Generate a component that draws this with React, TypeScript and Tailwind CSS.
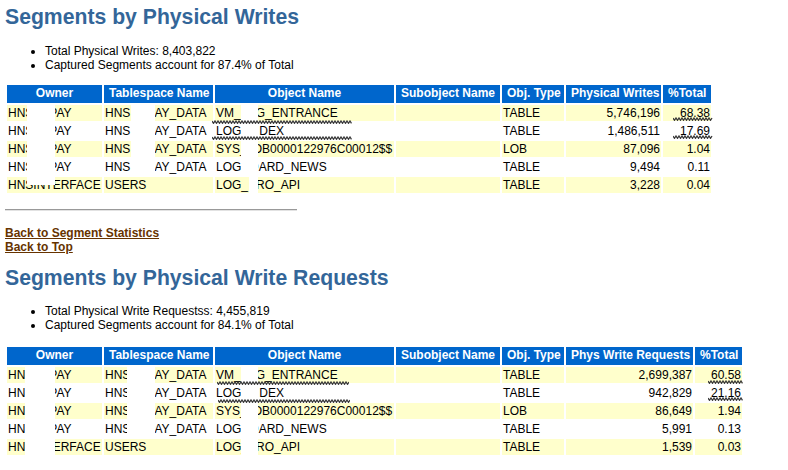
import React from 'react';

// [visible left, hidden gap class, visible right] or plain text
type Frag = string | [string, string, string];

interface SegRow {
  owner: Frag;
  ts: Frag;
  obj: Frag;
  type: string;
  val: string;
  pct: string;
}

const ownerPay: Frag = ['HNS', 'w-[16px]', 'PAY'];
const tsPay: Frag = ['HNS', 'w-[17px]', 'PAY_DATA'];

const objects: Frag[] = [
  ['VM_', 'w-[15px]', 'G_ENTRANCE'],
  ['LOG', 'w-[18px]', 'DEX'],
  ['SYS_', 'w-[6px]', 'OB0000122976C00012$$'],
  ['LOG', 'w-[8px]', 'OARD_NEWS'],
  ['LOG_', 'w-[8px]', 'RO_API'],
];

const types = ['TABLE', 'TABLE', 'LOB', 'TABLE', 'TABLE'];

const makeRows = (vals: string[], pcts: string[]): SegRow[] =>
  vals.map((v, i) => ({
    owner: i === 4 ? 'HNSINTERFACE' : ownerPay,
    ts: i === 4 ? 'USERS' : tsPay,
    obj: objects[i],
    type: types[i],
    val: v,
    pct: pcts[i],
  }));

const writesRows = makeRows(
  ['5,746,196', '1,486,511', '87,096', '9,494', '3,228'],
  ['68.38', '17.69', '1.04', '0.11', '0.04']
);

const requestRows = makeRows(
  ['2,699,387', '942,829', '86,649', '5,991', '1,539'],
  ['60.58', '21.16', '1.94', '0.13', '0.03']
);

const Text: React.FC<{ f: Frag }> = ({ f }) => {
  if (typeof f === 'string') return <>{f}</>;
  return (
    <>
      {f[0]}
      <span className={`inline-block ${f[1]}`} />
      {f[2]}
    </>
  );
};

// hand drawn squiggle under a value
const Squiggle: React.FC<{ className: string; w: number }> = ({ className, w }) => {
  const pts: string[] = [];
  for (let x = 0, i = 0; x <= w; x += 1.5, i++) {
    pts.push(`${x},${i % 2 === 0 ? 1 : 3.3}`);
  }
  return (
    <svg className={`absolute ${className}`} width={w} height={4} viewBox={`0 0 ${w} 4`}>
      <polyline points={pts.join(' ')} fill="none" stroke="#3a3a3a" strokeWidth="1.3" />
    </svg>
  );
};

const th = 'bg-[#0066CC] text-white font-bold text-center pt-px pb-[3px] px-[5px] whitespace-nowrap';

const SegTable: React.FC<{ rows: SegRow[]; valTitle: string; wide?: boolean }> = ({ rows, valTitle, wide }) => (
  <table
    className={`table-fixed border-separate border-spacing-[2px] text-[12px] leading-[14px] ${
      wide ? 'w-[739px]' : 'w-[708px]'
    }`}
  >
    <colgroup>
      <col className="w-[95px]" />
      <col className="w-[109px]" />
      <col className="w-[179px]" />
      <col className="w-[104px]" />
      <col className="w-[62px]" />
      <col className={wide ? 'w-[127px]' : 'w-[95px]'} />
      <col className={wide ? 'w-[47px]' : 'w-[48px]'} />
    </colgroup>
    <thead>
      <tr>
        <th className={th}>Owner</th>
        <th className={th}>Tablespace Name</th>
        <th className={th}>Object Name</th>
        <th className={th}>Subobject Name</th>
        <th className={th}>Obj. Type</th>
        <th className={th}>{valTitle}</th>
        <th className={th}>%Total</th>
      </tr>
    </thead>
    <tbody>
      {rows.map((r, i) => {
        const bg = i % 2 === 0 ? 'bg-[#FFFFCC]' : 'bg-white';
        const td = `${bg} p-px whitespace-nowrap overflow-hidden align-top`;
        return (
          <tr key={i}>
            <td className={td}><Text f={r.owner} /></td>
            <td className={td}><Text f={r.ts} /></td>
            <td className={td}><Text f={r.obj} /></td>
            <td className={td}></td>
            <td className={td}>{r.type}</td>
            <td className={`${td} text-right`}>{r.val}</td>
            <td className={`${td} text-right`}>{r.pct}</td>
          </tr>
        );
      })}
    </tbody>
  </table>
);

const Bullets: React.FC<{ items: string[]; className: string }> = ({ items, className }) => (
  <ul className={`list-disc pl-[40px] text-[12px] leading-[14px] ${className}`}>
    {items.map((t) => (
      <li key={t}>{t}</li>
    ))}
  </ul>
);

const Title: React.FC<{ children: React.ReactNode; className?: string }> = ({ children, className }) => (
  <h3 className={`text-[21.2px] leading-[24px] font-bold text-[#336699] ${className ?? ''}`}>{children}</h3>
);

export default function App() {
  return (
    <div className="min-h-screen bg-white pl-[5px] pt-[5px] font-['Liberation_Sans',Arial,sans-serif] text-black">
      <Title>Segments by Physical Writes</Title>
      <Bullets
        className="mt-[15px]"
        items={['Total Physical Writes: 8,403,822', 'Captured Segments account for 87.4% of Total']}
      />

      <div className="relative mt-[11px] w-fit">
        <SegTable rows={writesRows} valTitle="Physical Writes" />
        {/* redacted areas */}
        <div className="absolute left-[22px] top-[21px] w-[28px] h-[81px] bg-white" />
        <div className="absolute left-[126px] top-[21px] w-[24px] h-[71px] bg-white" />
        <div className="absolute left-[236px] top-[21px] w-[17px] h-[71px] bg-white" />
        <div className="absolute left-[244px] top-[92px] w-[9px] h-[19px] bg-white" />
        <Squiggle className="left-[207px] top-[37px]" w={140} />
        <Squiggle className="left-[207px] top-[53px]" w={140} />
        <Squiggle className="left-[668px] top-[34px]" w={40} />
        <Squiggle className="left-[668px] top-[52px]" w={40} />
      </div>

      <div className="mt-[14px] w-[292px] h-[2px] border-t border-t-[#999] border-b border-b-[#e2e2e2]" />

      <div className="mt-[15px] flex flex-col items-start text-[12px] leading-[14px] font-bold">
        <a href="#" className="text-[#663300] underline">Back to Segment Statistics</a>
        <a href="#" className="text-[#663300] underline">Back to Top</a>
      </div>

      <Title className="mt-[12px]">Segments by Physical Write Requests</Title>
      <Bullets
        className="mt-[14px]"
        items={['Total Physical Write Requestss: 4,455,819', 'Captured Segments account for 84.1% of Total']}
      />

      <div className="relative mt-[13px] w-fit">
        <SegTable rows={requestRows} valTitle="Phys Write Requests" wide />
        {/* redacted areas */}
        <div className="absolute left-[20px] top-[21px] w-[30px] h-[92px] bg-white" />
        <div className="absolute left-[122px] top-[21px] w-[28px] h-[72px] bg-white" />
        <div className="absolute left-[236px] top-[21px] w-[17px] h-[90px] bg-white" />
        <Squiggle className="left-[212px] top-[36px]" w={132} />
        <Squiggle className="left-[213px] top-[54px]" w={132} />
        <Squiggle className="left-[703px] top-[35px]" w={35} />
        <Squiggle className="left-[703px] top-[52px]" w={35} />
      </div>
    </div>
  );
}
